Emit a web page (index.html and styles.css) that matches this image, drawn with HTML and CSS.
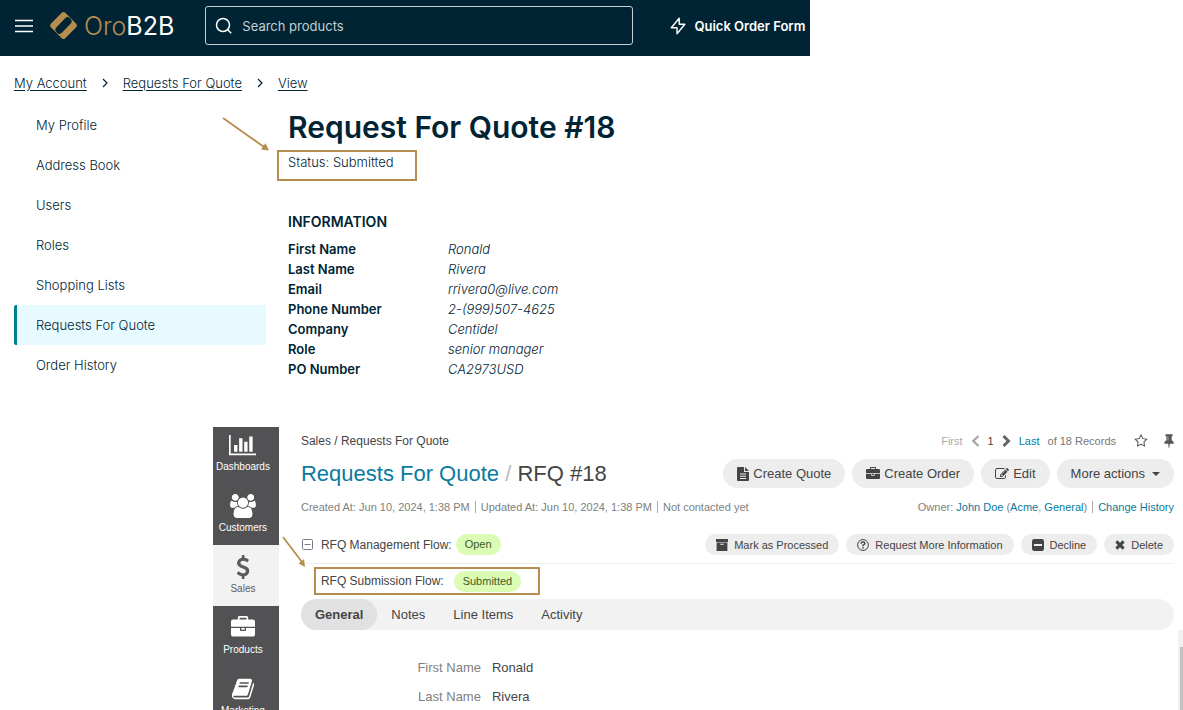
FILE: index.html
```html
<!DOCTYPE html>
<html lang="en">
<head>
<meta charset="utf-8">
<meta name="viewport" content="width=device-width, initial-scale=1">
<title>Request For Quote #18</title>
<link rel="stylesheet" href="styles.css">
</head>
<body>
<svg class="defs" aria-hidden="true">
  <symbol id="briefcase" viewBox="0 0 1792 1792"><path d="M640 256h512v-128h-512v128zm1152 640v480q0 66-47 113t-113 47h-1472q-66 0-113-47t-47-113v-480h672v160q0 26 19 45t45 19h320q26 0 45-19t19-45v-160h672zm-768 0v128h-256v-128h256zm768-480v384h-1792v-384q0-66 47-113t113-47h352v-160q0-40 28-68t68-28h576q40 0 68 28t28 68v160h352q66 0 113 47t47 113z"/></symbol>
</svg>

<section class="store">
  <header class="store-header">
    <button class="menu-button" type="button" aria-label="Menu">
      <svg width="18" height="14" viewBox="0 0 18 14" fill="none" stroke="currentColor" stroke-width="1.5"><path d="M0 1.5h18M0 7h18M0 12.500h18"/></svg>
    </button>
    <a class="logo" href="#">
      <svg width="29" height="29" viewBox="0 0 29 29"><rect x="4.300" y="4.300" width="20.400" height="20.400" rx="2.500" transform="rotate(45 14.500 14.500)" fill="#b58d4f"/><rect x="4.800" y="10.600" width="19.400" height="7.800" rx="3.600" transform="rotate(-46 14.500 14.500)" fill="#002434"/></svg>
      <span class="logo-text"><span class="logo-gold">Oro</span>B2B</span>
    </a>
    <label class="search">
      <svg width="18" height="18" viewBox="0 0 18 18" fill="none" stroke="currentColor" stroke-width="1.500"><circle cx="8" cy="8" r="6.500"/><path d="M12.800 12.800l3.400 3.400"/></svg>
      <input type="text" placeholder="Search products" aria-label="Search products">
    </label>
    <a class="quick-order" href="#">
      <svg width="16" height="18" viewBox="0 0 16 18" fill="none" stroke="currentColor" stroke-width="1.400" stroke-linejoin="round"><path d="M9.200 1.300L1.300 10.800h5.700v6L14.800 7.200H9.200z"/></svg>
      Quick Order Form
    </a>
  </header>

  <nav class="crumbs" aria-label="Breadcrumb">
    <a href="#">My Account</a>
    <svg width="6" height="10" viewBox="0 0 6 10" fill="none" stroke="currentColor" stroke-width="1.200"><path d="M1 1l4 4-4 4"/></svg>
    <a href="#">Requests For Quote</a>
    <svg width="6" height="10" viewBox="0 0 6 10" fill="none" stroke="currentColor" stroke-width="1.200"><path d="M1 1l4 4-4 4"/></svg>
    <a href="#">View</a>
  </nav>

  <div class="store-body">
    <nav class="account-nav" aria-label="Account">
      <a href="#">My Profile</a>
      <a href="#">Address Book</a>
      <a href="#">Users</a>
      <a href="#">Roles</a>
      <a href="#">Shopping Lists</a>
      <a class="current" href="#" aria-current="page">Requests For Quote</a>
      <a href="#">Order History</a>
    </nav>
    <main class="request">
      <h1>Request For Quote #18</h1>
      <p class="status">Status: Submitted</p>
      <h2>INFORMATION</h2>
      <dl class="info">
        <dt>First Name</dt><dd>Ronald</dd>
        <dt>Last Name</dt><dd>Rivera</dd>
        <dt>Email</dt><dd>rrivera0@live.com</dd>
        <dt>Phone Number</dt><dd>2-(999)507-4625</dd>
        <dt>Company</dt><dd>Centidel</dd>
        <dt>Role</dt><dd>senior manager</dd>
        <dt>PO Number</dt><dd>CA2973USD</dd>
      </dl>
      <svg class="arrow arrow-status" width="48" height="36" viewBox="0 0 48 36"><path d="M1 1L42 30" stroke="#b58d4f" stroke-width="1.800"/><path d="M47 33.500l-8-1 4.500-6.300z" fill="#b58d4f"/></svg>
    </main>
  </div>
</section>

<section class="admin">
  <nav class="sidebar" aria-label="Main menu">
    <a href="#"><svg width="27" height="24" viewBox="0 0 2048 1792"><path d="M640 896v512h-256v-512h256zm384-512v1024h-256v-1024h256zm1024 1152v128h-2048v-1536h128v1408h1920zm-640-896v768h-256v-768h256zm384-384v1152h-256v-1152h256z"/></svg>Dashboards</a>
    <a href="#"><svg width="26" height="24" viewBox="0 0 1920 1792"><path d="M593 896q-162 5-265 128h-134q-82 0-138-40.500t-56-118.500q0-353 124-353 6 0 43.500 21t97.500 42.500 119 21.500q67 0 133-23-5 37-5 66 0 139 81 256zm1071 637q0 120-73 189.500t-194 69.500h-874q-121 0-194-69.500t-73-189.500q0-53 3.500-103.500t14-109 26.500-108.500 43-97.500 62-81 85.500-53.500 111.500-20q10 0 43 21.500t73 48 107 48 135 21.500 135-21.500 107-48 73-48 43-21.500q61 0 111.500 20t85.500 53.500 62 81 43 97.500 26.500 108.500 14 109 3.500 103.500zm-1024-1277q0 106-75 181t-181 75-181-75-75-181 75-181 181-75 181 75 75 181zm704 384q0 159-112.500 271.500t-271.500 112.500-271.500-112.500-112.500-271.500 112.500-271.500 271.500-112.500 271.500 112.500 112.500 271.500zm576 225q0 78-56 118.500t-138 40.500h-134q-103-123-265-128 81-117 81-256 0-29-5-66 66 23 133 23 59 0 119-21.500t97.500-42.500 43.500-21q124 0 124 353zm-128-609q0 106-75 181t-181 75-181-75-75-181 75-181 181-75 181 75 75 181z"/></svg>Customers</a>
    <a class="current" href="#" aria-current="page"><svg width="24" height="24" viewBox="0 0 1792 1792"><path d="M1362 1185q0 153-99.500 263.500t-258.500 136.500v175q0 14-9 23t-23 9h-135q-13 0-22.500-9.500t-9.500-22.500v-175q-66-9-127.500-31t-101.500-44.500-74-48-46.500-37.500-17.500-18q-17-21-2-41l103-135q7-10 23-12 15-2 24 9l2 2q113 99 243 125 37 8 74 8 81 0 142.500-43t61.500-122q0-28-15-53t-33.500-42-58.500-37.500-66-32-80-32.500q-39-16-61.500-25t-61.500-26.500-62.500-31-56.500-35.500-53.500-42.500-43.500-49-35.500-58-21-66.500-8.500-78q0-138 98-242t255-134v-180q0-13 9.500-22.500t22.500-9.500h135q14 0 23 9t9 23v176q57 6 110.500 23t87 33.500 63.500 37.500 39 29 15 14q17 18 5 38l-81 146q-8 15-23 16-14 3-27-7-3-3-14.500-12t-39-26.500-58.500-32-74.500-26-85.500-11.500q-95 0-155 43t-60 111q0 26 8.500 48t29.500 41.500 39.500 33 56 31 60.500 27 70 27.500q53 20 81 31.500t76 35 75.500 42.500 62 50 53 63.500 31.500 76.500 13 94z"/></svg>Sales</a>
    <a href="#"><svg width="24" height="24"><use href="#briefcase"/></svg>Products</a>
    <a href="#"><svg width="24" height="24" viewBox="0 0 1792 1792"><path d="M1703 478q40 57 18 129l-275 906q-19 64-76.500 107.500t-122.500 43.500h-923q-77 0-148.500-53.500t-99.500-131.500q-24-67-2-127 0-4 3-27t4-37q1-8-3-21.500t-3-19.500q2-11 8-21t16.500-23.500 16.500-23.500q23-38 45-91.500t30-91.500q3-10 .5-30t-.5-28q3-11 17-28t17-23q21-36 42-92t25-90q1-9-2.500-32t.5-28q4-13 22-30.500t22-22.500q19-26 42.500-84.500t27.500-96.500q1-8-3-25.500t-2-26.500q2-8 9-18t18-23 17-21q8-12 16.500-30.500t15-35 16-36 19.500-32 26.500-23.500 36-11.500 47.500 5.500l-1 3q38-9 51-9h761q74 0 114 56t18 130l-274 906q-36 119-71.500 153.500t-128.500 34.500h-869q-27 0-38 15-11 16-1 43 24 70 144 70h923q29 0 56-15.500t35-41.500l300-987q7-22 5-57 38 15 59 43zm-1064 2q-4 13 2 22.500t20 9.500h608q13 0 25.500-9.500t16.500-22.500l21-64q4-13-2-22.500t-20-9.500h-608q-13 0-25.500 9.500t-16.500 22.500zm-83 256q-4 13 2 22.500t20 9.500h608q13 0 25.500-9.500t16.500-22.500l21-64q4-13-2-22.500t-20-9.500h-608q-13 0-25.500 9.500t-16.500 22.500z"/></svg>Marketing</a>
  </nav>

  <div class="record">
    <div class="record-head">
      <div class="row top-row">
        <span>Sales / Requests For Quote</span>
        <div class="pager">
          <span class="faint">First</span>
          <svg width="9" height="12" viewBox="0 0 9 12" fill="none" stroke="#aaa" stroke-width="2.400"><path d="M7.500 1L2.300 6l5.200 5"/></svg>
          <span>1</span>
          <svg width="9" height="12" viewBox="0 0 9 12" fill="none" stroke="#666" stroke-width="3"><path d="M1.500 1l5 5-5 5"/></svg>
          <a href="#">Last</a>
          <span class="muted">of 18 Records</span>
          <button class="icon-button star" type="button" aria-label="Favorite"><svg width="14" height="14" viewBox="0 0 1792 1792"><path d="M1201 1004l306-297-422-62-189-382-189 382-422 62 306 297-73 421 378-199 377 199zm527-357q0 22-26 48l-363 354 86 500q1 7 1 20 0 50-41 50-19 0-40-12l-449-236-449 236q-22 12-40 12-21 0-31.500-14.500t-10.500-35.500q0-6 2-20l86-500-364-354q-25-27-25-48 0-37 56-46l502-73 225-455q19-41 49-41t49 41l225 455 502 73q56 9 56 46z"/></svg></button>
          <button class="icon-button" type="button" aria-label="Pin"><svg width="10" height="14" viewBox="300 100 1184 1692"><path d="M800 864v-448q0-14-9-23t-23-9-23 9-9 23v448q0 14 9 23t23 9 23-9 9-23zm672 352q0 26-19 45t-45 19h-429l-51 483q-2 12-10.500 20.500t-20.500 8.500h-1q-27 0-32-27l-76-485h-404q-26 0-45-19t-19-45q0-123 78.500-221.500t177.500-98.500v-512q-52 0-90-38t-38-90 38-90 90-38h640q52 0 90 38t38 90-38 90-90 38v512q99 0 177.500 98.500t78.500 221.500z"/></svg></button>
        </div>
      </div>

      <div class="row title-row">
        <h2 class="record-title"><a href="#">Requests For Quote</a> <span class="slash">/</span> RFQ #18</h2>
        <div class="actions">
          <button type="button"><svg width="12" height="14" viewBox="0 0 12 14"><path fill-rule="evenodd" d="M0 1Q0 0 1 0H7V5H12V13Q12 14 11 14H1Q0 14 0 13zM8 0l4 4H8zM3 6.500v1h6v-1zM3 8.700v1h6v-1zM3 10.900v1h6v-1z"/></svg>Create Quote</button>
          <button type="button"><svg width="14" height="14"><use href="#briefcase"/></svg>Create Order</button>
          <button type="button"><svg width="14" height="14" viewBox="0 0 1792 1792"><path d="M888 1184l116-116-152-152-116 116v56h96v96h56zm440-720q-16-16-33 1l-350 350q-17 17-1 33t33-1l350-350q17-17 1-33zm80 594v190q0 119-84.500 203.500t-203.500 84.500h-832q-119 0-203.500-84.500t-84.500-203.500v-832q0-119 84.500-203.500t203.500-84.500h832q63 0 117 25 15 7 18 23 3 17-9 29l-49 49q-14 14-32 8-23-6-45-6h-832q-66 0-113 47t-47 113v832q0 66 47 113t113 47h832q66 0 113-47t47-113v-126q0-13 9-22l64-64q15-15 35-7t20 29zm-96-738l288 288-672 672h-288v-288zm444 132l-92 92-288-288 92-92q28-28 68-28t68 28l152 152q28 28 28 68t-28 68z"/></svg>Edit</button>
          <button type="button">More actions<svg class="caret" width="8" height="4" viewBox="0 0 8 4"><path d="M0 0h8L4 4z"/></svg></button>
        </div>
      </div>

      <div class="row meta-row">
        <div class="meta"><span>Created At: Jun 10, 2024, 1:38 PM</span><span>Updated At: Jun 10, 2024, 1:38 PM</span><span>Not contacted yet</span></div>
        <div class="meta"><span>Owner: <a href="#">John Doe</a> (<a href="#">Acme</a>, <a href="#">General</a>)</span><span><a href="#">Change History</a></span></div>
      </div>

      <div class="row flow-row">
        <div class="flow">
          <button class="icon-button" type="button" aria-label="Collapse"><svg width="12" height="11" viewBox="0 0 12 11" fill="none" stroke="#777c88"><rect x="1.500" y=".5" width="10" height="10" rx="1"/><path d="M3.500 5.500h6"/></svg></button>
          <span>RFQ Management Flow:</span><span class="pill">Open</span>
        </div>
        <div class="actions small">
          <button type="button"><svg width="12" height="12" viewBox="0 0 12 12"><path fill-rule="evenodd" d="M0 0h12v3H0zM.6 3.600h10.800V12H.6zM4.200 4.700v1.100h3.600V4.700z"/></svg>Mark as Processed</button>
          <button type="button"><svg width="12" height="12" viewBox="0 0 12 12" fill="none" stroke="currentColor"><circle cx="6" cy="6" r="5.400"/><path stroke-width="1.400" d="M4 4.700Q4.100 3 6 3t2 1.600Q8 5.600 6 6.200V7.200M6 8v1.400"/></svg>Request More Information</button>
          <button type="button"><svg width="12" height="12" viewBox="0 0 11 11"><path fill-rule="evenodd" d="M2 0h7q2 0 2 2v7q0 2-2 2H2Q0 11 0 9V2Q0 0 2 0zM1.800 4.600v1.800h7.400V4.600z"/></svg>Decline</button>
          <button type="button"><svg width="10" height="10" viewBox="0 0 10 10" stroke="currentColor" stroke-width="3"><path d="M1.400 1.400l7.200 7.200M8.600 1.400L1.400 8.600"/></svg>Delete</button>
        </div>
      </div>

      <div class="submission"><span>RFQ Submission Flow:</span><span class="pill">Submitted</span></div>

      <nav class="tabs" aria-label="Sections">
        <a class="current" href="#">General</a><a href="#">Notes</a><a href="#">Line Items</a><a href="#">Activity</a>
      </nav>
    </div>

    <div class="record-body">
      <dl class="fields">
        <dt>First Name</dt><dd>Ronald</dd>
        <dt>Last Name</dt><dd>Rivera</dd>
      </dl>
      <div class="scroll-track"></div>
    </div>
    <svg class="arrow arrow-flow" width="25" height="34" viewBox="0 0 25 34"><path d="M1 1L20 26" stroke="#b58d4f" stroke-width="1.800"/><path d="M23 31l-6.500-3.500 5.500-4.200z" fill="#b58d4f"/></svg>
  </div>
</section>
</body>
</html>
```
FILE: styles.css
```css
* { box-sizing: border-box; }

body {
  margin: 0;
  height: 100vh;
  overflow: hidden;
  display: flex;
  flex-direction: column;
  background: #fff;
  font-family: "Liberation Sans", Arial, sans-serif;
}

h1, h2, p, dl, dd { margin: 0; }
a { color: inherit; text-decoration: none; }
button { font: inherit; color: inherit; border: 0; padding: 0; background: none; cursor: pointer; }
svg { display: block; flex: none; fill: currentColor; }
svg[fill="none"] { fill: none; }
.defs { position: absolute; width: 0; height: 0; }

/* Storefront */
.store {
  flex: none;
  color: #002434;
  font-family: Inter, "Open Sans", sans-serif;
  font-size: 13px;
  font-weight: 300;
  line-height: 20px;
  padding-bottom: 42px;
}

.store-header {
  width: 68.5%;
  height: 56px;
  padding: 0 5px 5px 15px;
  display: flex;
  align-items: center;
  background: #002434;
  color: #fff;
}

.logo { display: flex; align-items: center; gap: 6px; margin: 0 31px 0 16px; }
.logo-text { font-size: 25px; line-height: 32px; font-weight: 400; }
.logo-gold { color: #b58d4f; font-weight: 300; }

.search {
  flex: 1;
  height: 39px;
  padding: 0 9px;
  display: flex;
  align-items: center;
  gap: 9px;
  border: 1px solid #c5ced2;
  border-radius: 3px;
}
.search input {
  flex: 1;
  min-width: 0;
  padding: 0;
  border: 0;
  outline: 0;
  background: none;
  color: #fff;
  font: inherit;
  font-weight: 400;
}
.search input::placeholder { color: #c5ced2; opacity: 1; }

.quick-order { display: flex; align-items: center; gap: 8px; margin-left: 37px; font-weight: 600; white-space: nowrap; }

.crumbs { display: flex; align-items: center; gap: 15px; padding: 17px 14px 12px; }
.crumbs a { text-decoration: underline; text-underline-offset: 2px; }

.store-body { display: flex; gap: 22px; padding-left: 14px; }

.account-nav { width: 252px; display: flex; flex-direction: column; }
.account-nav a { padding: 10px 19px; border-left: 3px solid transparent; }
.account-nav .current { background: #e6faff; border-color: #00808b; border-radius: 2px 0 0 2px; }

.request { position: relative; flex: 1; }
.request h1 { font-size: 30px; line-height: 40px; font-weight: 600; padding-top: 2px; }
.request h2 { font-size: 14px; line-height: 20px; font-weight: 600; margin: 31px 0 7px; }

.status {
  width: 140px;
  height: 31px;
  margin: 3px 0 0 -11px;
  padding-left: 9px;
  border: 2px solid #b58d4f;
}

.info { display: grid; grid-template-columns: 160px 1fr; }
.info dt { font-weight: 600; }
.info dd { font-style: italic; }

.arrow { position: absolute; }
.arrow-status { left: -66px; top: 12px; }

/* Back office */
.admin {
  flex: 1;
  min-height: 0;
  margin-left: 18%;
  display: flex;
  color: #444;
  font-size: 12px;
}
.admin a { color: #0b7aa0; }

.sidebar { flex: none; width: 66px; overflow: hidden; background: #525254; }
.admin .sidebar a {
  display: flex;
  flex-direction: column;
  align-items: center;
  gap: 4px;
  padding: 10px 6px 11px 0;
  color: #fff;
  font-size: 10px;
  line-height: 12px;
}
.admin .sidebar a:first-child { padding-top: 6px; }
.admin .sidebar .current { background: #f2f2f2; color: #5c5c5e; }

.record { position: relative; flex: 1; min-width: 0; display: flex; flex-direction: column; }
.record-head { padding: 0 9px 0 22px; }
.row { display: flex; align-items: center; justify-content: space-between; white-space: nowrap; }

.top-row { height: 28px; }
.pager { display: flex; align-items: center; gap: 8px; font-size: 11px; }
.faint { color: #aaa; }
.muted { color: #777; }
.icon-button { color: #555; }
.star { margin: 0 8px 0 10px; }

.title-row { margin-top: 4px; }
.record-title { font-size: 22px; line-height: 28px; font-weight: 400; }
.slash { color: #bbb; }

.actions { display: flex; gap: 7px; font-size: 13px; }
.actions button {
  display: flex;
  align-items: center;
  gap: 4px;
  height: 29px;
  padding: 0 14px;
  border-radius: 15px;
  background: #ededed;
}
.actions .caret { margin-left: 3px; }

.meta-row { height: 38px; color: #808080; font-size: 11px; }
.meta { display: flex; }
.meta span + span { margin-left: 5px; padding-left: 5px; border-left: 1px solid #aaa; }

.flow-row { height: 38px; border-bottom: 1px solid #f0f0f0; }
.flow { display: flex; align-items: center; gap: 4px; }
.flow .icon-button { margin-right: 4px; }
.actions.small { font-size: 11px; }
.small button { height: 21px; padding: 0 11px; gap: 6px; }

.pill {
  padding: 0 9px;
  border-radius: 11px;
  background: #dafcb4;
  color: #3f5a26;
  font-size: 11px;
  line-height: 21px;
}

.submission {
  width: 226px;
  margin: 3px 0 4px 13px;
  padding: 0 5px;
  height: 28px;
  display: flex;
  align-items: center;
  gap: 10px;
  border: 2px solid #b58d4f;
}

.tabs { display: flex; border-radius: 16px; background: #f2f2f2; font-size: 13px; line-height: 31px; }
.admin .tabs a { padding: 0 14px; color: #444; border-radius: 16px; }
.admin .tabs .current { background: #e1e1e1; font-weight: 700; }

.record-body { flex: 1; min-height: 0; display: flex; justify-content: space-between; }
.fields {
  display: grid;
  grid-template-columns: 202px auto;
  align-content: start;
  column-gap: 11px;
  row-gap: 9px;
  padding-top: 28px;
  font-size: 13px;
  line-height: 20px;
}
.fields dt { color: #808080; text-align: right; }

.scroll-track { width: 5px; padding: 17px 0 0 2px; background: #f1f1f1; }
.scroll-track::before { content: ""; display: block; height: 100%; background: #c1c1c1; }

.arrow-flow { left: 3px; top: 109px; }
```
